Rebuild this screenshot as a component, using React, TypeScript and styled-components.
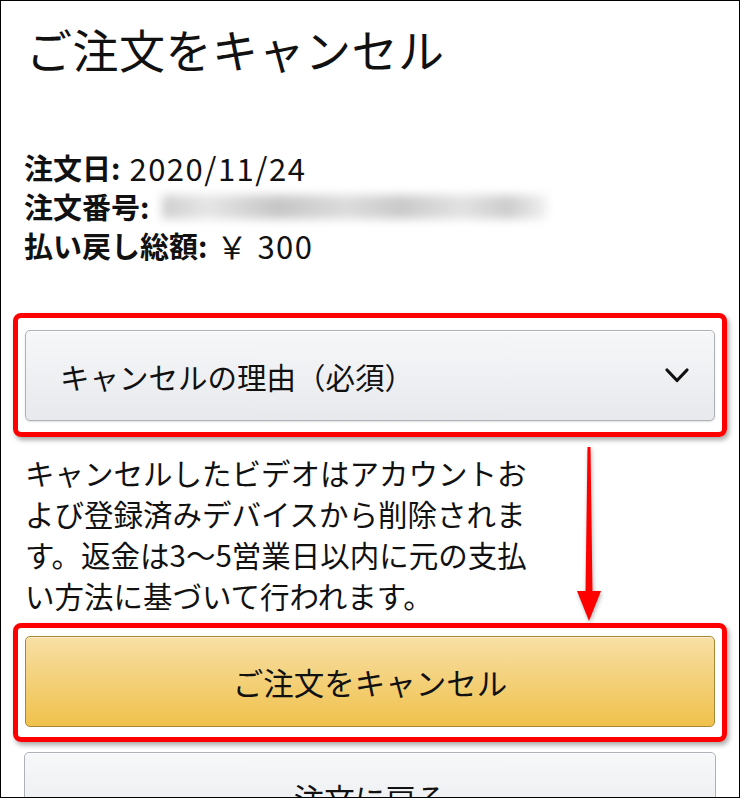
import React from "react";
import styled, { createGlobalStyle } from "styled-components";

const GlobalStyle = createGlobalStyle`
  html, body {
    margin: 0;
    padding: 0;
    background: #ffffff;
  }
  body {
    font-family: "Noto Sans CJK JP", "Noto Sans", sans-serif;
    color: #111111;
  }
`;

const Frame = styled.div`
  position: relative;
  width: 740px;
  height: 798px;
  box-sizing: border-box;
  border: 1px solid #000000;
  overflow: hidden;
  background: #ffffff;
  padding: 0 23px;
`;

const Title = styled.h1`
  margin: 19px 0 0 2px;
  font-size: 46px;
  line-height: 56px;
  font-weight: 400;
  letter-spacing: 0.5px;
  color: #111111;
`;

const InfoList = styled.div`
  margin-top: 72px;
  font-size: 29px;
  line-height: 39px;
`;

const InfoRow = styled.div`
  display: flex;
  align-items: center;
  white-space: nowrap;
`;

const Label = styled.span`
  font-weight: 700;
  margin-right: 9px;
`;

const Value = styled.span`
  font-size: 31px;
  letter-spacing: 1.5px;
`;

const Blurred = styled.span`
  display: inline-block;
  width: 385px;
  height: 24px;
  margin-left: 4px;
  background: linear-gradient(
    90deg,
    #cfcfcf 0%,
    #e6e6e6 12%,
    #c6c6c6 30%,
    #dcdcdc 48%,
    #cacaca 62%,
    #e2e2e2 78%,
    #cdcdcd 90%,
    #f2f2f2 100%
  );
  filter: blur(5px);
`;

const Highlight = styled.div<{ $padTop?: number; $padBottom?: number }>`
  margin: 0 -11px;
  border: 5px solid #ff0000;
  border-radius: 8px;
  padding: ${(p) => p.$padTop ?? 11}px 7px ${(p) => p.$padBottom ?? 10}px;
  box-shadow: 2px 3px 5px rgba(0, 0, 0, 0.35);
`;

const SelectBox = styled.div`
  height: 91px;
  box-sizing: border-box;
  display: flex;
  align-items: center;
  justify-content: space-between;
  padding: 0 24px 0 34px;
  border: 1px solid #adb1b8;
  border-radius: 5px;
  background: linear-gradient(180deg, #f6f7f9 0%, #e8e9ec 100%);
  box-shadow: inset 0 1px 0 rgba(255, 255, 255, 0.7), 0 1px 2px rgba(0, 0, 0, 0.12);
  font-size: 29.5px;
  color: #111111;
`;

const Note = styled.p`
  margin: 15px 0 0 1px;
  font-size: 29.5px;
  line-height: 41px;
  color: #111111;
`;

const Button = styled.div<{ $primary?: boolean }>`
  height: 91px;
  box-sizing: border-box;
  display: flex;
  align-items: center;
  justify-content: center;
  border: 1px solid ${(p) => (p.$primary ? "#a88734" : "#adb1b8")};
  border-radius: 5px;
  background: ${(p) =>
    p.$primary
      ? "linear-gradient(180deg, #f7dfa5 0%, #f0c14b 100%)"
      : "linear-gradient(180deg, #f7f8fa 0%, #e7e9ec 100%)"};
  box-shadow: inset 0 1px 0 rgba(255, 255, 255, 0.5);
  font-size: 30.5px;
  color: #111111;
`;

const Spacer = styled.div<{ $h: number }>`
  height: ${(p) => p.$h}px;
`;

const Arrow = styled.svg`
  position: absolute;
  left: 576px;
  top: 446px;
  filter: drop-shadow(1px 2px 2px rgba(0, 0, 0, 0.3));
`;

const Chevron = () => (
  <svg width="26" height="17" viewBox="0 0 26 17">
    <polyline
      points="3,3 13,13.5 23,3"
      fill="none"
      stroke="#111"
      strokeWidth="3.2"
      strokeLinecap="round"
      strokeLinejoin="round"
    />
  </svg>
);

export default function App() {
  return (
    <>
      <GlobalStyle />
      <Frame>
        <Title>ご注文をキャンセル</Title>
        <InfoList>
          <InfoRow>
            <Label>注文日:</Label>
            <Value>2020/11/24</Value>
          </InfoRow>
          <InfoRow>
            <Label>注文番号:</Label>
            <Blurred />
          </InfoRow>
          <InfoRow>
            <Label>払い戻し総額:</Label>
            <Value>￥ 300</Value>
          </InfoRow>
        </InfoList>
        <Spacer $h={48} />
        <Highlight $padTop={12} $padBottom={11}>
          <SelectBox>
            <span>キャンセルの理由（必須）</span>
            <Chevron />
          </SelectBox>
        </Highlight>
        <Note>
          キャンセルしたビデオはアカウントお
          <br />
          よび登録済みデバイスから削除されま
          <br />
          す。返金は3〜5営業日以内に元の支払
          <br />
          い方法に基づいて行われます。
        </Note>
        <Spacer $h={7} />
        <Highlight $padTop={8} $padBottom={10}>
          <Button $primary>ご注文をキャンセル</Button>
        </Highlight>
        <Spacer $h={10} />
        <Button>注文に戻る</Button>
        <Arrow width="24" height="174" viewBox="0 0 24 174">
          <polygon points="10.5,0 13.5,0 15.5,146 8.5,146" fill="#ff0000" />
          <polygon points="0,144 24,144 12,174" fill="#ff0000" />
        </Arrow>
      </Frame>
    </>
  );
}
